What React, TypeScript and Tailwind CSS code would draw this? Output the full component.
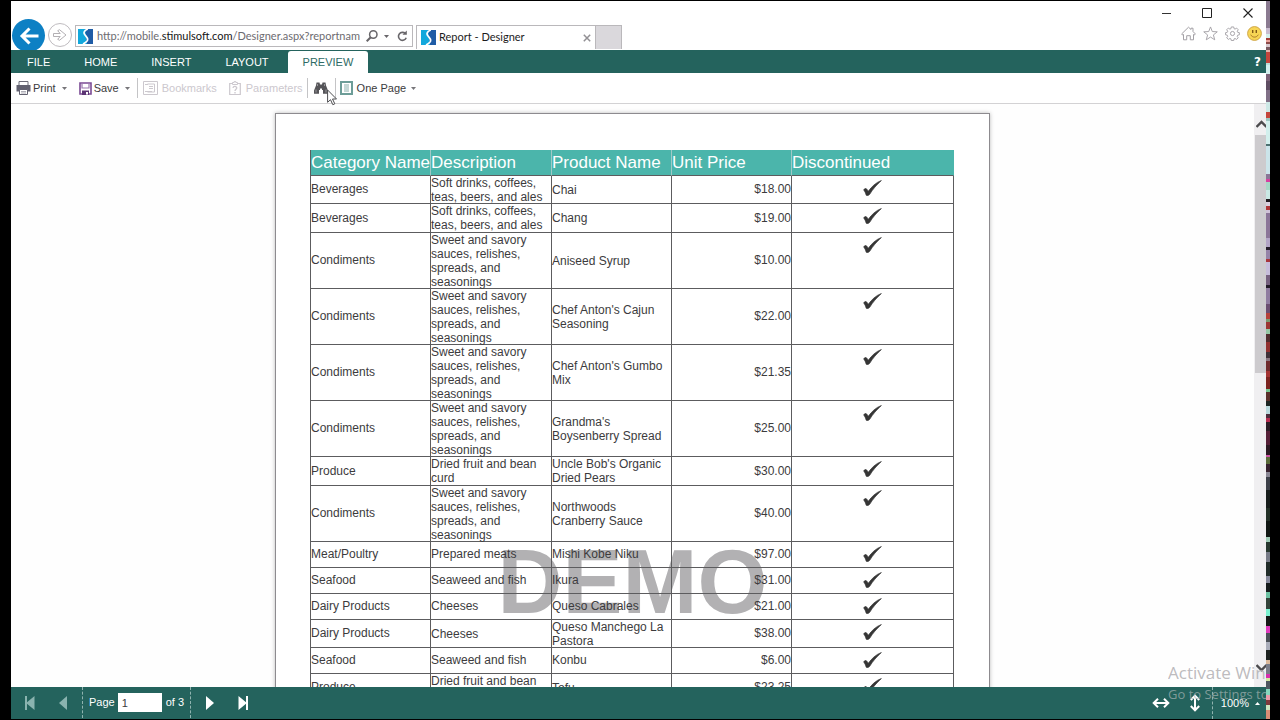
import type { ReactNode } from "react";

type Row = {
  category: string;
  description: string;
  product: string;
  price: string;
  size: "single" | "double" | "doubleTall" | "quad";
};

const sauces = "Sweet and savory sauces, relishes, spreads, and seasonings";

const rows: Row[] = [
  { category: "Beverages", description: "Soft drinks, coffees, teas, beers, and ales", product: "Chai", price: "$18.00", size: "double" },
  { category: "Beverages", description: "Soft drinks, coffees, teas, beers, and ales", product: "Chang", price: "$19.00", size: "doubleTall" },
  { category: "Condiments", description: sauces, product: "Aniseed Syrup", price: "$10.00", size: "quad" },
  { category: "Condiments", description: sauces, product: "Chef Anton's Cajun Seasoning", price: "$22.00", size: "quad" },
  { category: "Condiments", description: sauces, product: "Chef Anton's Gumbo Mix", price: "$21.35", size: "quad" },
  { category: "Condiments", description: sauces, product: "Grandma's Boysenberry Spread", price: "$25.00", size: "quad" },
  { category: "Produce", description: "Dried fruit and bean curd", product: "Uncle Bob's Organic Dried Pears", price: "$30.00", size: "doubleTall" },
  { category: "Condiments", description: sauces, product: "Northwoods Cranberry Sauce", price: "$40.00", size: "quad" },
  { category: "Meat/Poultry", description: "Prepared meats", product: "Mishi Kobe Niku", price: "$97.00", size: "single" },
  { category: "Seafood", description: "Seaweed and fish", product: "Ikura", price: "$31.00", size: "single" },
  { category: "Dairy Products", description: "Cheeses", product: "Queso Cabrales", price: "$21.00", size: "single" },
  { category: "Dairy Products", description: "Cheeses", product: "Queso Manchego La Pastora", price: "$38.00", size: "double" },
  { category: "Seafood", description: "Seaweed and fish", product: "Konbu", price: "$6.00", size: "single" },
  { category: "Produce", description: "Dried fruit and bean curd", product: "Tofu", price: "$23.25", size: "double" },
];

const rowHeights = {
  single: "h-[26px] [&>td]:pb-0.5",
  double: "h-7",
  doubleTall: "h-[29px]",
  quad: "h-14",
};

const stripes: [string, number][] = [
  ["#8a7a90", 24], ["#c9bccf", 5], ["#d5efec", 3], ["#a33b36", 2], ["#e7a19a", 2], ["#8d4a48", 2], ["#d9c9cf", 2],
  ["#7a5a60", 3], ["#e2b3ac", 2], ["#c4453c", 9], ["#b9dfd8", 2], ["#d2efed", 8], ["#7b6277", 6], ["#5f4d62", 8],
  ["#806f86", 10], ["#cde8e6", 9], ["#c4453c", 5], ["#9cc5c0", 3], ["#d2efed", 20], ["#4c6f70", 2], ["#cbe4ea", 24],
  ["#8a7596", 5], ["#d63fa0", 2], ["#a5d8c5", 7], ["#c9e8e4", 8], ["#20191f", 3], ["#d9d0df", 3], ["#ad3538", 4],
  ["#cfc2d8", 2], ["#8b7598", 22], ["#b3a5c6", 8], ["#251c2a", 3], ["#9684a8", 8], ["#a8353c", 2], ["#c6bddb", 12],
  ["#75607f", 8], ["#221a28", 3], ["#8f7ca0", 14], ["#6a4d70", 8], ["#b5403a", 5], ["#7b9a70", 3], ["#9c3633", 6],
  ["#94c7a4", 4], ["#4f2b2d", 7], ["#91302f", 9], ["#3f3037", 5], ["#8a7680", 3], ["#6e2a2c", 9], ["#a33332", 5],
  ["#7a231f", 10], ["#76c490", 3], ["#5b2f2b", 8], ["#1d2422", 4], ["#b9d8dc", 7], ["#4d2a3a", 4], ["#b42b50", 3],
  ["#2a1c25", 8], ["#551f37", 12], ["#2b1822", 9], ["#cc52a5", 2], ["#5b6b3b", 6], ["#35202d", 7], ["#8a8794", 4],
  ["#3c3f48", 12], ["#171c1b", 15], ["#233027", 12], ["#101613", 14], ["#9fc9b5", 4], ["#28372f", 9], ["#777b87", 9],
  ["#1f2a27", 12], ["#85889a", 6], ["#141a1a", 8], ["#6cc1a2", 5], ["#334239", 10], ["#7cf1d0", 6], ["#151716", 9],
  ["#df39bd", 6], ["#4a4f56", 8], ["#a9acb9", 7], ["#1c211f", 8], ["#d9b79a", 4], ["#787b88", 9], ["#d62fae", 3],
  ["#d4e6a3", 3], ["#4e5660", 7], ["#86d6bd", 5], ["#ec9bab", 4], ["#7f3a3c", 5], ["#cde5bf", 4], ["#d98d75", 8],
];

function Caret({ up = false }: { up?: boolean }) {
  return (
    <svg viewBox="0 0 5 3" className="h-[3px] w-[5px]" fill="currentColor" aria-hidden="true">
      <path d={up ? "M0 3 2.5 0 5 3Z" : "M0 0h5L2.5 3Z"} />
    </svg>
  );
}

function SiteIcon() {
  return (
    <svg viewBox="0 0 15 15" className="size-[15px] shrink-0" aria-hidden="true">
      <path d="M0 0h15v15H0Z" fill="#12a8dc" />
      <path d="M7 0h8v15H9Z" fill="#1f5ca6" />
      <path d="M9.8 0C6.3 1.5 5.2 3.6 6.7 5.6 8.5 8 10.6 9.2 9.3 11.6 8.500 13 7.200 14 5 15" fill="none" stroke="#fff" strokeWidth="1.7" />
    </svg>
  );
}

function CheckMark() {
  return (
    <svg viewBox="0 0 19 16" className="mx-auto block h-4 w-[19px]" role="img" aria-label="Yes">
      <path
        d="M.6 9.900C1.400 8.800 2.700 8.300 3.300 8.700 4.200 9.300 4.700 10.500 5.300 11.300 8.600 6.700 12.800 2.500 18.400.5 13.800 4.700 9.700 9.300 6.700 14.300 6 15.300 3.800 16 3.200 15.200 2.800 13.500 1.800 11 .6 9.900Z"
        fill="#353535"
        stroke="#353535"
        strokeWidth=".7"
        strokeLinejoin="round"
      />
    </svg>
  );
}

function Divider() {
  return <span className="h-5 w-px bg-[#c4c4c6]" />;
}

function MenuTab({ children, active = false }: { children: ReactNode; active?: boolean }) {
  return (
    <button
      type="button"
      className={
        active
          ? "h-[22px] rounded-t-[3px] bg-white px-[15px] text-[#2d6a64]"
          : "h-[22px] px-[15px] text-white"
      }
    >
      {children}
    </button>
  );
}

function BrowserBar() {
  return (
    <header className="flex h-[49px] shrink-0 items-end justify-between overflow-hidden bg-white font-[Lato,'Noto_Sans',sans-serif] text-[11px]">
      <div className="flex h-[31px] items-start">
        <button type="button" aria-label="Back" className="ml-px flex size-[33px] items-center justify-center rounded-full bg-[#0d80c4]">
          <svg viewBox="0 0 20 18" className="h-[18px] w-5" fill="none" stroke="#fff" strokeWidth="3" aria-hidden="true">
            <path d="M19.500 9H3M10.500 1.500 3 9l7.500 7.500" />
          </svg>
        </button>
        <button type="button" aria-label="Forward" className="mt-1 ml-[3px] flex size-6 items-center justify-center rounded-full border border-[#bfbcc0]">
          <svg viewBox="0 0 14 12" className="h-3 w-3.5" fill="none" stroke="#b3b0b4" aria-hidden="true">
            <path d="M.5 4.500h6.700L4.700 1.700 6.500.7l6.500 5.300-6.500 5.300-1.800-1L7.200 7.500H.5Z" />
          </svg>
        </button>
        <div className="mt-1.5 ml-[3px] flex h-[22px] w-[338px] items-center border border-[#bab8bb] pr-1 pl-0.5">
          <SiteIcon />
          <div
            role="textbox"
            aria-label="Address"
            contentEditable
            suppressContentEditableWarning
            className="ml-1 w-[266px] overflow-hidden whitespace-nowrap text-[#6d6b70] outline-none"
          >
            http://mobile.<span className="text-[#151515]">stimulsoft.com</span>/Designer.aspx?reportname=Report
          </div>
          <button type="button" aria-label="Search" className="ml-1.5">
            <svg viewBox="0 0 12 12" className="size-3" fill="none" stroke="#68666a" strokeWidth="1.500" aria-hidden="true">
              <circle cx="7.300" cy="4.500" r="3.700" />
              <path d="M4.700 7.300.7 11.300" strokeWidth="2" />
            </svg>
          </button>
          <button type="button" aria-label="Address list" className="ml-1.5 text-[#68666a]">
            <Caret />
          </button>
          <button type="button" aria-label="Refresh" className="ml-2">
            <svg viewBox="0 0 11 12" className="h-3 w-[11px]" fill="none" stroke="#68666a" strokeWidth="1.600" aria-hidden="true">
              <path d="M8.300 3.500A4 4 0 1 0 9.200 7.800" />
              <path d="M9.800.5v4.300H5.500Z" fill="#68666a" stroke="none" />
            </svg>
          </button>
        </div>
        <div className="mt-1.5 ml-[3px] flex h-6 w-[180px] items-center border border-b-0 border-[#bab8bb] pr-1 pl-1">
          <SiteIcon />
          <span className="ml-[3px] flex-1 text-[#1c1c1c]">Report - Designer</span>
          <button type="button" aria-label="Close tab">
            <svg viewBox="0 0 8 8" className="size-2" stroke="#929094" strokeWidth="1.500" aria-hidden="true">
              <path d="m.8.8 6.400 6.400m0-6.400L.8 7.200" />
            </svg>
          </button>
        </div>
        <button type="button" aria-label="New tab" className="mt-1.5 h-6 w-[26px] border border-b-0 border-l-0 border-[#bab8bb] bg-[#dad8dc]" />
      </div>

      <div className="flex h-full flex-col items-end pt-[7px]">
        <div className="flex items-center gap-[31px] pr-[13px]">
          <button type="button" aria-label="Minimize">
            <svg viewBox="0 0 9 10" className="block h-2.5 w-[9px]" stroke="#333" aria-hidden="true">
              <path d="M0 5.500h9" />
            </svg>
          </button>
          <button type="button" aria-label="Maximize">
            <svg viewBox="0 0 10 10" className="block size-2.5" fill="none" stroke="#222" aria-hidden="true">
              <path d="M.5.500h9v9h-9Z" />
            </svg>
          </button>
          <button type="button" aria-label="Close">
            <svg viewBox="0 0 10 10" className="block size-2.5" stroke="#222" strokeWidth="1.100" aria-hidden="true">
              <path d="m.5.500 9 9m0-9-9 9" />
            </svg>
          </button>
        </div>
        <div className="mt-2 flex items-center gap-[7px] pr-1 text-[#a3a0a5]">
          <button type="button" aria-label="Home">
            <svg viewBox="0 0 15 15" className="block size-[15px]" fill="none" stroke="currentColor" aria-hidden="true">
              <path d="M2.500 8.500 1.500 9 .7 7.900 7.500 1.200l2.500 2.300V2.200h2v3.300l2.300 2.400-.8 1.100-1-.5v5.300H9.300V9.700H5.700v4.100H2.500Z" />
            </svg>
          </button>
          <button type="button" aria-label="Favorites">
            <svg viewBox="0 0 16 16" className="block size-[15px]" fill="none" stroke="currentColor" aria-hidden="true">
              <path d="m8 1 1.900 4.900 5.300.3-4.100 3.300 1.400 5.200L8 11.800l-4.500 2.900 1.400-5.200L.8 6.200l5.300-.3Z" />
            </svg>
          </button>
          <button type="button" aria-label="Tools">
            <svg viewBox="0 0 16 16" className="block size-[15px]" fill="none" stroke="currentColor" aria-hidden="true">
              <path d="M6.700 1h2.600l.4 1.900 1 .4 1.700-1.100 1.700 1.800-1 1.600.4 1.100 1.800.4v2.300l-1.800.4-.5 1.200 1.100 1.600-1.700 1.700-1.700-1-1 .4-.4 1.800H6.700l-.4-1.800-1.100-.4-1.600 1-1.800-1.700 1.100-1.600-.5-1.200L.6 9.400V7.100l1.800-.4.500-1.100-1.100-1.600 1.800-1.800 1.600 1.100 1.100-.4Z" />
              <circle cx="8" cy="8" r="2.200" />
            </svg>
          </button>
          <button type="button" aria-label="Feedback">
            <svg viewBox="0 0 15 15" className="block size-[15px]" aria-hidden="true">
              <circle cx="7.500" cy="7.500" r="6.900" fill="#f7d554" stroke="#cfa64b" />
              <path d="M5.700 4v3M9.300 4v3" stroke="#805a18" strokeWidth="1.400" />
              <path d="M3.700 8.700c1.700 3.200 5.900 3.200 7.600 0" fill="none" stroke="#a87627" />
            </svg>
          </button>
        </div>
      </div>
    </header>
  );
}

function Toolbar() {
  return (
    <div className="flex h-[31px] shrink-0 items-center border-b border-[#d3d2d4] bg-white pl-[5px] text-[#3b3b3d]">
      <button type="button" className="flex items-center">
        <svg viewBox="0 0 15 14" className="h-3.5 w-[15px]" aria-hidden="true">
          <path d="M3 4V.5h9V4" fill="#fff" stroke="#6d6c78" />
          <path d="M.5 4h14v6.500H.5Z" fill="#626170" />
          <path d="M3.500 8.500h8v5h-8Z" fill="#fff" stroke="#626170" />
          <path d="M5 10.500h5M5 12h5" stroke="#8d8b98" strokeWidth=".7" />
        </svg>
        <span className="ml-0.5">Print</span>
        <span className="ml-1.5 text-[#77767a]"><Caret /></span>
      </button>
      <button type="button" className="ml-3 flex items-center">
        <svg viewBox="0 0 13 13" className="size-[13px]" fill="none" aria-hidden="true">
          <path d="M1 1h11v11H1Z" stroke="#7b4a94" strokeWidth="1.600" />
          <path d="M3 1v5h7V1" stroke="#9a76ad" strokeWidth="1.200" />
          <path d="M3 8.500h7V13H3Z" fill="#5c3574" />
          <path d="M7 10h2v2.500H7Z" fill="#fff" />
        </svg>
        <span className="ml-0.5">Save</span>
        <span className="ml-1.5 text-[#77767a]"><Caret /></span>
      </button>
      <span className="mr-[5px] ml-[7px] flex"><Divider /></span>
      <button type="button" disabled className="flex items-center text-[#ccc8ce]">
        <svg viewBox="0 0 15 14" className="h-3.5 w-[15px]" fill="none" stroke="currentColor" aria-hidden="true">
          <path d="M.5.500h14v13H.5ZM4.500 3h7v8h-7" />
          <path d="M2 3.500h3M6 5.500h4M6 7.500h4M2 10.500h7" />
        </svg>
        <span className="ml-1">Bookmarks</span>
      </button>
      <button type="button" disabled className="ml-3 flex items-center text-[#ccc8ce]">
        <svg viewBox="0 0 12 14" className="h-3.5 w-3" fill="none" stroke="currentColor" aria-hidden="true">
          <path d="M.7 2.500h10.600v11H.7Z" strokeWidth="1.200" />
          <path d="M3.500 3.500v-2h1.700V.5h1.600v1h1.700v2Z" fill="#fff" />
          <path d="M4 7c.2-2.200 3.900-1.900 3.800 0C7.700 8.300 6 8.300 6 10M6 11v1.500" strokeWidth="1.300" />
        </svg>
        <span className="ml-[5px]">Parameters</span>
      </button>
      <span className="mr-1.5 ml-1 flex"><Divider /></span>
      <button type="button" aria-label="Find" className="relative">
        <svg viewBox="0 0 14 12" className="block h-3 w-3.5" fill="#555458" aria-hidden="true">
          <path d="M2.500.5h3l.5 2h2l.500-2h3l.500 3L14 8.500v3.300H9V8H8V6.500H6V8H5v3.800H0V8.500L2 3.500Z" />
          <path d="M3.500 2v2M10.500 2v2M2 7.500v3M12 7.500v3" stroke="#aaa8ac" strokeWidth=".8" />
        </svg>
        <svg viewBox="0 0 11 17" className="absolute top-[7px] left-[13px] z-10 h-[17px] w-[11px]" fill="#fff" stroke="#4d4d50" aria-hidden="true">
          <path d="M.6 1v12.300l2.900-2.600 2.300 5 2-.9-2.300-4.800h4Z" />
        </svg>
      </button>
      <span className="mr-1 ml-[7px] flex"><Divider /></span>
      <button type="button" className="flex items-center">
        <svg viewBox="0 0 13 14" className="h-3.5 w-[13px]" fill="none" aria-hidden="true">
          <path d="M1 1h11v12H1Z" stroke="#6d9d98" strokeWidth="2" />
          <path d="M4 4h5M4 6h5M4 8h5M4 10h5" stroke="#6d9d98" strokeWidth=".8" />
        </svg>
        <span className="ml-1">One Page</span>
        <span className="ml-[5px] text-[#77767a]"><Caret /></span>
      </button>
    </div>
  );
}

function ReportTable() {
  return (
    <table className="relative w-full table-fixed border-separate border-spacing-0 border-l border-[#5c5c5e] text-left text-[12px] leading-[14px] text-[#3c3b3d]">
      <colgroup>
        <col className="w-[120px]" />
        <col className="w-[121px]" />
        <col className="w-[120px]" />
        <col className="w-[120px]" />
        <col />
      </colgroup>
      <thead>
        <tr className="h-[26px] bg-[#4bb5ab] text-[17px] leading-5 whitespace-nowrap text-white">
          {["Category Name", "Description", "Product Name", "Unit Price", "Discontinued"].map((title) => (
            <th key={title} scope="col" className="border-r border-b border-r-[#9fc9c6] border-b-[#5c5c5e] p-0 font-normal last:border-r-[#4bb5ab]">
              {title}
            </th>
          ))}
        </tr>
      </thead>
      <tbody className="[&_td]:border-r [&_td]:border-b [&_td]:border-[#5c5c5e]">
        {rows.map((row) => (
          <tr key={row.product} className={rowHeights[row.size]}>
            <td className="p-0 pb-px">{row.category}</td>
            <td className="p-0"><div className="-my-px">{row.description}</div></td>
            <td className="p-0"><div className="-my-px">{row.product}</div></td>
            <td className="p-0 pb-px text-right">{row.price}</td>
            <td className="p-0 pt-1 align-top"><CheckMark /></td>
          </tr>
        ))}
      </tbody>
    </table>
  );
}

function StatusBar() {
  return (
    <footer className="flex h-8 shrink-0 items-center justify-between bg-[#24635d] text-white">
      <div className="flex h-full items-center pb-px">
        <button type="button" aria-label="First page" className="ml-3.5 text-[#8ab3af]">
          <svg viewBox="0 0 10 14" className="block h-3.5 w-2.5" fill="currentColor" aria-hidden="true">
            <path d="M0 0h2v6.300L9.500 0v14L2 7.700V14H0Z" />
          </svg>
        </button>
        <button type="button" aria-label="Previous page" className="ml-6 text-[#8ab3af]">
          <svg viewBox="0 0 8 14" className="block h-3.5 w-2" fill="currentColor" aria-hidden="true">
            <path d="M8 0v14L0 7Z" />
          </svg>
        </button>
        <label className="ml-[15px] flex h-full items-center border-x border-dashed border-[#8fb3af] px-1.5">
          <span>Page</span>
          <input type="text" defaultValue="1" aria-label="Page number" className="mr-1 ml-[3px] h-[19px] w-11 bg-white px-1 text-[#3b3b3d] outline-none" />
          <span>of 3</span>
        </label>
        <button type="button" aria-label="Next page" className="ml-[15px]">
          <svg viewBox="0 0 8 14" className="block h-3.5 w-2" fill="currentColor" aria-hidden="true">
            <path d="M0 0v14l8-7Z" />
          </svg>
        </button>
        <button type="button" aria-label="Last page" className="ml-6">
          <svg viewBox="0 0 10 14" className="block h-3.5 w-2.5" fill="currentColor" aria-hidden="true">
            <path d="M10 0H8v6.300L.5 0v14L8 7.700V14h2Z" />
          </svg>
        </button>
      </div>
      <div className="flex h-full items-center">
        <button type="button" aria-label="Fit width">
          <svg viewBox="0 0 18 10" className="block h-2.5 w-[18px]" fill="none" stroke="#fff" strokeWidth="2" aria-hidden="true">
            <path d="M2 5h14M6 .8 1.700 5 6 9.200M12 .8 16.300 5 12 9.200" />
          </svg>
        </button>
        <button type="button" aria-label="Fit height" className="ml-5">
          <svg viewBox="0 0 10 18" className="block h-[18px] w-2.5" fill="none" stroke="#fff" strokeWidth="2" aria-hidden="true">
            <path d="M5 2v14M.8 6 5 1.700 9.200 6M.8 12 5 16.300 9.200 12" />
          </svg>
        </button>
        <button type="button" className="ml-3 flex h-full items-center gap-1.5 border-l border-dashed border-[#8fb3af] pr-1.5 pl-2">
          100% <Caret up />
        </button>
      </div>
    </footer>
  );
}

export default function App() {
  return (
    <div className="flex h-screen overflow-hidden bg-black py-px pr-2.5 pl-[11px] font-['Liberation_Sans',Arial,sans-serif] text-[11px]">
      <div className="relative flex min-w-0 flex-1 flex-col overflow-hidden bg-white">
        <BrowserBar />
        <nav className="flex h-[23px] shrink-0 items-end justify-between bg-[#24635d] pl-px">
          <div className="flex gap-1">
            <MenuTab>FILE</MenuTab>
            <MenuTab>HOME</MenuTab>
            <MenuTab>INSERT</MenuTab>
            <MenuTab>LAYOUT</MenuTab>
            <MenuTab active>PREVIEW</MenuTab>
          </div>
          <button type="button" aria-label="Help" className="h-[22px] pr-[5px] font-['DejaVu_Sans',sans-serif] text-[12px] font-bold text-white">
            ?
          </button>
        </nav>
        <Toolbar />
        <main className="flex min-h-0 flex-1">
          <div className="flex flex-1 justify-center overflow-hidden bg-[#fefefe] pt-[9px]">
            <article className="relative h-[1010px] w-[715px] shrink-0 border border-[#8d8b8f] bg-white pt-9 pr-[35px] pl-[34px] shadow-[0_0_4px_#bbb]">
              <div aria-hidden="true" className="absolute inset-x-0 top-[418px] text-center text-[90px] leading-[100px] font-bold text-[#b2b1b3]">
                DEMO
              </div>
              <ReportTable />
            </article>
          </div>
          <div className="flex w-3 shrink-0 flex-col items-end justify-between overflow-hidden bg-[#f0eff1] text-[#4c4b4e]">
            <div className="flex w-full flex-col items-end">
              <button type="button" aria-label="Scroll up" className="flex h-[31px] items-center pt-2">
                <svg viewBox="0 0 10 8" className="h-2 w-2.5" fill="none" stroke="currentColor" strokeWidth="2.400" aria-hidden="true">
                  <path d="M.5 7 5.500 2l5 5" />
                </svg>
              </button>
              <div className="h-[238px] w-[11px] bg-[#cdcbce]" />
            </div>
            <button type="button" aria-label="Scroll down" className="pb-[15px]">
              <svg viewBox="0 0 10 8" className="h-2 w-2.5" fill="none" stroke="currentColor" strokeWidth="2.400" aria-hidden="true">
                <path d="M.5 1l5 5 5-5" />
              </svg>
            </button>
          </div>
        </main>
        <StatusBar />
        <div className="pointer-events-none absolute right-0 bottom-4 w-[98px] overflow-hidden font-['Open_Sans','Noto_Sans',sans-serif] whitespace-nowrap text-[#b5b3b6]/90">
          <p className="text-[17px] leading-6">Activate Windows</p>
          <p className="text-[13px] leading-[18px] text-[#a9b5b5]/70">Go to Settings to activate Windows.</p>
        </div>
      </div>
      <div aria-hidden="true" className="flex w-1 shrink-0 flex-col">
        {stripes.map(([color, weight], index) => (
          <span key={index} className="basis-0" style={{ backgroundColor: color, flexGrow: weight }} />
        ))}
      </div>
    </div>
  );
}
